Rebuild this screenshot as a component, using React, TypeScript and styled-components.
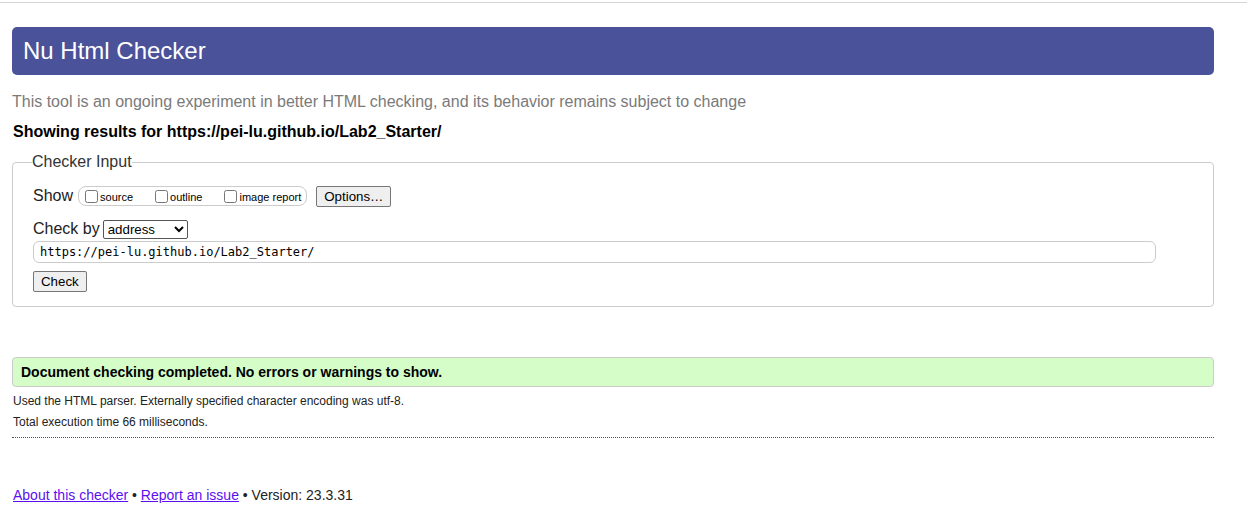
import React from "react";
import styled, { createGlobalStyle } from "styled-components";

const Global = createGlobalStyle`
  html, body { margin: 0; padding: 0; background: #fff; }
  body { font-family: Arial, "Liberation Sans", sans-serif; color: #000; }
`;

const TopRule = styled.div`
  margin-top: 2px;
  height: 1px;
  background: #d4d4d4;
`;

const Main = styled.main`
  padding: 0 33px 0 12px;
`;

const Header = styled.h1`
  margin: 24px 0 0;
  height: 48px;
  line-height: 48px;
  padding-left: 11px;
  background: #4a5299;
  color: #fff;
  font-size: 24px;
  font-weight: normal;
  border-radius: 5px;
`;

const Note = styled.p`
  margin: 17px 0 0;
  font-size: 16px;
  line-height: 20px;
  color: #7a7a7a;
`;

const Results = styled.p`
  margin: 10px 0 0 1px;
  font-size: 16px;
  line-height: 20px;
  font-weight: bold;
`;

const Fieldset = styled.fieldset`
  margin: 11px 0 0;
  padding: 0 20px 14px;
  border: 1px solid #cccccc;
  border-radius: 4px;
`;

const Legend = styled.legend`
  padding: 0;
  margin-left: -1px;
  font-size: 16px;
  line-height: 18px;
  color: #333;
`;

const Row = styled.div<{ $top: number; $h: number }>`
  display: flex;
  align-items: center;
  margin-top: ${(p) => p.$top}px;
  height: ${(p) => p.$h}px;
`;

const Label = styled.span`
  font-size: 16px;
  margin-right: 3px;
  color: #222;
`;

const Group = styled.span`
  display: inline-flex;
  align-items: center;
  height: 18px;
  margin-left: 2px;
  padding: 0 5px 0 2px;
  border: 1px solid #cccccc;
  border-radius: 8px;
`;

const Opt = styled.label<{ $gap: number }>`
  display: inline-flex;
  align-items: center;
  font-size: 11px;
  margin-right: ${(p) => p.$gap}px;
  input { margin: 0 2px 0 4px; width: 13px; height: 13px; }
  span { padding-top: 2px; }
`;

const Button = styled.button<{ $left?: number }>`
  font-family: Arial, "Liberation Sans", sans-serif;
  font-size: 13.3px;
  height: 21px;
  margin-left: ${(p) => p.$left ?? 0}px;
  padding: 0 7px;
  background: #efefef;
  border: 1px solid #767676;
  border-radius: 2px;
  color: #000;
`;

const Select = styled.select`
  font-family: Arial, "Liberation Sans", sans-serif;
  font-size: 13.3px;
  width: 85px;
  height: 19px;
  border: 1px solid #555;
  border-radius: 2px;
  background: #fff;
  color: #000;
`;

const UrlInput = styled.input`
  box-sizing: border-box;
  width: 1123px;
  height: 22px;
  padding: 0 6px;
  border: 1px solid #cccccc;
  border-radius: 6px;
  font-family: "DejaVu Sans Mono", "Liberation Mono", monospace;
  font-size: 12px;
  color: #000;
`;

const Success = styled.div`
  margin-top: 50px;
  height: 28px;
  line-height: 28px;
  padding-left: 8px;
  background: #d5fdc8;
  border: 1px solid #cccccc;
  border-radius: 4px;
  font-size: 14px;
  font-weight: bold;
`;

const Detail = styled.p<{ $top: number }>`
  margin: ${(p) => p.$top}px 0 0 1px;
  font-size: 12px;
  line-height: 14px;
  color: #222;
`;

const Dotted = styled.hr`
  margin: 8px 0 0;
  border: 0;
  border-top: 1px dotted #555;
`;

const Footer = styled.p`
  margin: 49px 0 0 1px;
  font-size: 14px;
  line-height: 16px;
  color: #222;
  a { color: #5a10ee; }
`;

export default function App() {
  return (
    <>
      <Global />
      <TopRule />
      <Main>
        <Header>Nu Html Checker</Header>
        <Note>
          This tool is an ongoing experiment in better HTML checking, and its behavior remains subject to change
        </Note>
        <Results>Showing results for https://pei-lu.github.io/Lab2_Starter/</Results>
        <Fieldset>
          <Legend>Checker Input</Legend>
          <Row $top={14} $h={22}>
            <Label>Show</Label>
            <Group>
              <Opt $gap={18}><input type="checkbox" /><span>source</span></Opt>
              <Opt $gap={18}><input type="checkbox" /><span>outline</span></Opt>
              <Opt $gap={0}><input type="checkbox" /><span>image report</span></Opt>
            </Group>
            <Button $left={9}>Options…</Button>
          </Row>
          <Row $top={11} $h={22}>
            <Label>Check by</Label>
            <Select defaultValue="address">
              <option value="address">address</option>
              <option value="file">file upload</option>
              <option value="text">text input</option>
            </Select>
          </Row>
          <Row $top={1} $h={22}>
            <UrlInput defaultValue="https://pei-lu.github.io/Lab2_Starter/" />
          </Row>
          <Row $top={7} $h={22}>
            <Button>Check</Button>
          </Row>
        </Fieldset>
        <Success>Document checking completed. No errors or warnings to show.</Success>
        <Detail $top={7}>Used the HTML parser. Externally specified character encoding was utf-8.</Detail>
        <Detail $top={7}>Total execution time 66 milliseconds.</Detail>
        <Dotted />
        <Footer>
          <a href="#about">About this checker</a> • <a href="#issue">Report an issue</a> • Version: 23.3.31
        </Footer>
      </Main>
    </>
  );
}
